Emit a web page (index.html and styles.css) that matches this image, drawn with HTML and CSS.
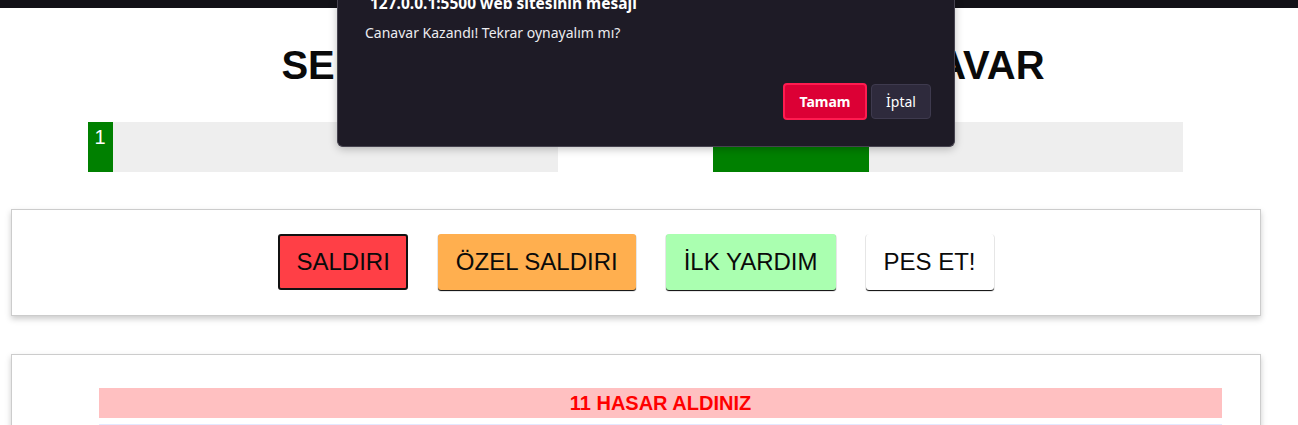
FILE: index.html
```html
<!DOCTYPE html>
<html lang="tr">
<head>
<meta charset="utf-8">
<title>Canavar Avcısı</title>
<link rel="stylesheet" href="styles.css">
</head>
<body>
<div class="topbar"></div>
<main class="page">
  <section class="stats">
    <div class="col">
      <h1 class="name">SEN</h1>
      <div class="healthbar"><div class="health" style="width: 1%">1</div></div>
    </div>
    <div class="col">
      <h1 class="name">CANAVAR</h1>
      <div class="healthbar"><div class="health" style="width: 33.4%">33</div></div>
    </div>
  </section>
  <section class="controls">
    <button class="btn btn-attack is-focused">SALDIRI</button>
    <button class="btn btn-special">ÖZEL SALDIRI</button>
    <button class="btn btn-heal">İLK YARDIM</button>
    <button class="btn btn-giveup">PES ET!</button>
  </section>
  <section class="log">
    <ul class="log-list">
      <li class="log-item monster-turn">11 HASAR ALDINIZ</li>
      <li class="log-item player-turn">CANAVARA 8 HASAR VERDİNİZ</li>
    </ul>
  </section>
</main>
<div class="dialog">
  <div class="dialog-title">127.0.0.1:5500 web sitesinin mesajı</div>
  <div class="dialog-message">Canavar Kazandı! Tekrar oynayalım mı?</div>
  <div class="dialog-actions">
    <button class="dlg-btn dlg-ok">Tamam</button>
    <button class="dlg-btn dlg-cancel">İptal</button>
  </div>
</div>
</body>
</html>
```

FILE: styles.css
```css
* { box-sizing: border-box; }

html, body {
  margin: 0;
  padding: 0;
  background: #ffffff;
  font-family: "Liberation Sans", Arial, sans-serif;
  color: #0a0a0a;
  overflow: hidden;
}

.topbar {
  height: 8px;
  background: #121117;
}

.page {
  width: 1250px;
  margin-left: 11px;
}

.stats {
  display: flex;
  margin-left: -1px;
}

.col {
  width: 625px;
  display: flex;
  flex-direction: column;
  align-items: center;
}

.name {
  margin: 34px 0 34px;
  font-size: 40px;
  line-height: 46px;
  font-weight: bold;
  text-align: center;
}

.healthbar {
  width: 470px;
  height: 50px;
  background: #eeeeee;
  display: flex;
}

.health {
  background: #008000;
  color: #ffffff;
  font-size: 20px;
  line-height: 23px;
  padding: 4px 7px 0;
  min-width: max-content;
}

.controls {
  margin-top: 37px;
  border: 1px solid #cccccc;
  box-shadow: 0 3px 6px #cccccc;
  padding: 24px 0 25px;
  display: flex;
  justify-content: center;
  gap: 30px;
}

.btn {
  font-family: "Liberation Sans", Arial, sans-serif;
  font-size: 24px;
  line-height: 28px;
  color: #0a0a0a;
  padding: 12px 16px;
  border: 2px solid transparent;
  border-radius: 3px;
  box-shadow: 0 1px 1px #000000;
  margin: 0;
}

.btn-attack { background: #ff3f46; }
.btn-special { background: #ffaf4f; }
.btn-heal { background: #aaffb0; }
.btn-giveup { background: #ffffff; }

.btn.is-focused {
  border-color: #111111;
  box-shadow: none;
}

.log {
  margin-top: 38px;
  border: 1px solid #cccccc;
  box-shadow: 0 3px 6px #cccccc;
  padding: 33px 38px 10px 87px;
  height: 200px;
}

.log-list {
  list-style: none;
  margin: 0;
  padding: 0;
}

.log-item {
  text-align: center;
  font-weight: bold;
  text-transform: uppercase;
  font-size: 20px;
  line-height: 22px;
  padding: 4px 0;
  margin-bottom: 6px;
}

.monster-turn { color: #ff0000; background: #ffc0c1; }
.player-turn { color: #0000ff; background: #e4e8ff; }

/* Browser alert dialog overlay */
.dialog {
  position: absolute;
  top: 0;
  left: 337px;
  width: 618px;
  height: 147px;
  background: #1e1b26;
  border: 1px solid #46434f;
  border-top: none;
  border-radius: 0 0 6px 6px;
  padding: 0 23px 0 27px;
  display: flex;
  flex-direction: column;
  font-family: "Noto Sans", "Open Sans", sans-serif;
  box-shadow: 0 2px 8px rgba(0, 0, 0, 0.25);
}

.dialog-title {
  margin-top: -6px;
  padding-left: 5px;
  font-size: 15.5px;
  line-height: 18px;
  font-weight: bold;
  color: #ffffff;
}

.dialog-message {
  margin-top: 12px;
  font-size: 14px;
  line-height: 18px;
  color: #ececf0;
}

.dialog-actions {
  margin-top: 41px;
  display: flex;
  justify-content: flex-end;
  align-items: center;
  gap: 4px;
}

.dlg-btn {
  font-family: "Noto Sans", "Open Sans", sans-serif;
  font-size: 14px;
  line-height: 18px;
  color: #ffffff;
  border-radius: 4px;
  margin: 0;
}

.dlg-ok {
  background: #dc0035;
  border: 2px solid #ff1c50;
  font-weight: bold;
  width: 84px;
  height: 37px;
}

.dlg-cancel {
  background: #2e2a3c;
  border: 1px solid #3e3a4e;
  width: 60px;
  height: 35px;
}
```
